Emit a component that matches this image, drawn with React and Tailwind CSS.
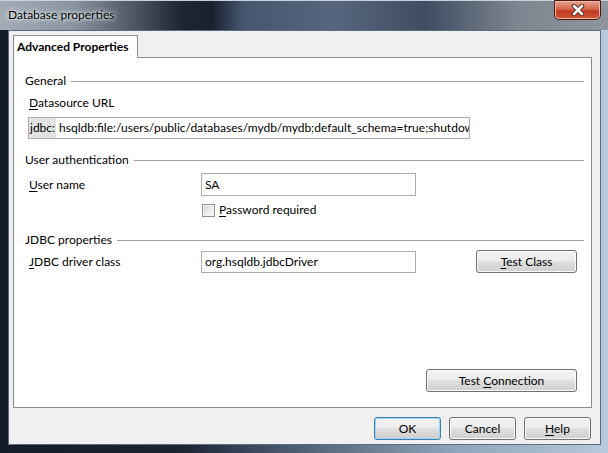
function U({ children }) {
  return <span className="underline underline-offset-2 decoration-1">{children}</span>;
}

function GroupHeader({ title, className = '' }) {
  return (
    <div className={`flex items-center h-4 pl-[11px] pr-[7px] ${className}`}>
      <span className="leading-4">{title}</span>
      <div className="flex-1 ml-[5px] h-px bg-[#a0a0a0]" />
    </div>
  );
}

function WinButton({ children, className = '', isDefault = false }) {
  return (
    <button
      className={`h-[23px] rounded-[3px] border text-[12px] leading-4 text-black bg-[linear-gradient(#f3f3f3_0%,#ececec_48%,#dedede_52%,#d0d0d0_100%)] ${
        isDefault
          ? 'border-[#3c7fb1] shadow-[inset_0_0_0_1px_#9fd6f3]'
          : 'border-[#707070] shadow-[inset_0_0_0_1px_#fbfbfb]'
      } ${className}`}
    >
      {children}
    </button>
  );
}

function TextBox({ children, className = '' }) {
  return (
    <div
      className={`bg-white border border-[#abadb3] flex items-center overflow-hidden whitespace-nowrap leading-4 ${className}`}
    >
      {children}
    </div>
  );
}

export default function App() {
  return (
    <div className="w-[608px] h-[453px] flex flex-col overflow-hidden text-[12px] text-black font-[Lato,'Noto_Sans',sans-serif] bg-[linear-gradient(90deg,#141b26_0%,#1b2432_30%,#44536a_45%,#8fa5bb_75%,#b7c9dc_100%)]">
      {/* title bar */}
      <div className="h-[30px] flex items-start pl-[8px] pr-[7px] bg-[linear-gradient(90deg,#a3acb6_0%,#8a95a1_12%,#1c2533_30%,#192231_35%,#45566f_40%,#56667e_55%,#3f4d62_70%,#7d8590_85%,#8f959c_100%)] border-t border-[#c9d1da]">
        <span className="mt-[6px] leading-4 [text-shadow:0_0_6px_#ffffff,0_0_3px_#ffffff]">Database properties</span>
        <div className="ml-auto w-[47px] h-[20px] -mt-px rounded-b-[5px] border border-[#4a1a12] bg-[linear-gradient(#e8a48f_0%,#d4654c_45%,#c13b22_55%,#d0563a_100%)] shadow-[inset_0_0_0_1px_#f1b8a6] flex items-center justify-center">
          <svg width="14" height="12" viewBox="0 0 14 12">
            <path d="M3 2 L11 10 M11 2 L3 10" stroke="#5a1a10" strokeWidth="4.5" strokeLinecap="round" fill="none" />
            <path d="M3 2 L11 10 M11 2 L3 10" stroke="#ffffff" strokeWidth="2.6" strokeLinecap="round" fill="none" />
          </svg>
        </div>
      </div>

      {/* client area */}
      <div className="ml-[8px] mr-[7px] h-[415px] bg-[#f0f0f0] border border-[#5d6b7b] pl-[4px] pt-[4px] pr-[8px] flex flex-col">
        <div className="flex">
          <div className="h-[23px] w-[125px] bg-white border border-b-0 border-[#898c95] -mb-px relative z-10 pl-[3px] pt-[3px] font-bold leading-4">
            Advanced Properties
          </div>
        </div>
        <div className="w-[579px] h-[351px] bg-white border border-[#898c95] flex flex-col">
          <GroupHeader title="General" className="mt-[15px]" />
          <div className="mt-[6px] pl-[15px] leading-4">
            <U>D</U>atasource URL
          </div>
          <TextBox className="mt-[6px] ml-[14px] w-[442px] h-[22px]">
            <span className="self-stretch flex items-center bg-[#e3e3e3] px-px">jdbc:</span>
            <span className="ml-[3px]">hsqldb:file:/users/public/databases/mydb/mydb;default_schema=true;shutdown</span>
          </TextBox>

          <GroupHeader title="User authentication" className="mt-[13px]" />
          <div className="mt-[5px] flex items-center h-[23px]">
            <div className="pl-[15px] w-[187px] leading-4">
              <U>U</U>ser name
            </div>
            <TextBox className="w-[215px] h-[23px] pl-[3px]">SA</TextBox>
          </div>
          <div className="mt-[6px] flex items-center h-4 pl-[188px]">
            <div className="w-[13px] h-[13px] border border-[#8e8f8f] bg-[linear-gradient(135deg,#d2d2d2_0%,#eeeeee_60%,#fafafa_100%)] shadow-[inset_0_0_0_1px_#f4f4f4]" />
            <span className="ml-[4px] leading-4">
              <U>P</U>assword required
            </span>
          </div>

          <GroupHeader title="JDBC properties" className="mt-[14px]" />
          <div className="mt-[2px] flex items-center h-[23px]">
            <div className="pl-[15px] w-[187px] leading-4">
              <U>J</U>DBC driver class
            </div>
            <TextBox className="w-[215px] h-[22px] mt-px pl-[3px]">org.hsqldb.jdbcDriver</TextBox>
            <WinButton className="ml-[60px] w-[101px]">
              <U>T</U>est Class
            </WinButton>
          </div>

          <div className="mt-auto mb-[15px] pl-[412px] flex">
            <WinButton className="w-[151px]">
              Test <U>C</U>onnection
            </WinButton>
          </div>
        </div>

        <div className="mt-[9px] flex justify-end gap-[8px] pr-px">
          <WinButton isDefault className="w-[67px] h-[22px]">OK</WinButton>
          <WinButton className="w-[67px] h-[22px]">Cancel</WinButton>
          <WinButton className="w-[67px] h-[22px]">
            <U>H</U>elp
          </WinButton>
        </div>
      </div>
    </div>
  );
}
